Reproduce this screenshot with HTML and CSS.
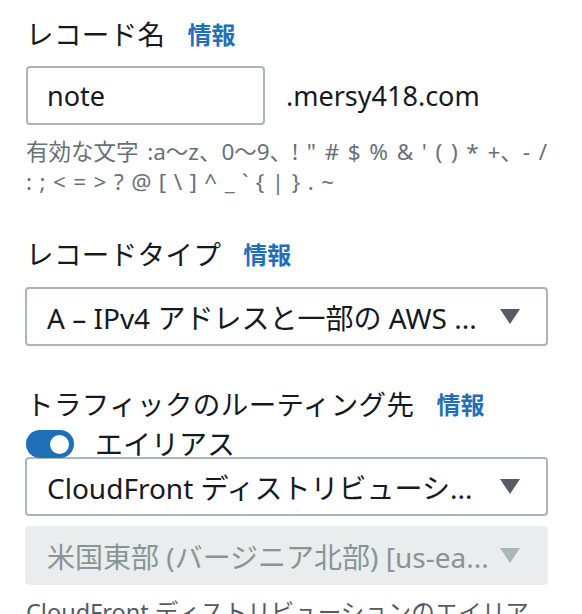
FILE: index.html
```html
<!DOCTYPE html>
<html lang="ja">
<head>
<meta charset="utf-8">
<link rel="stylesheet" href="styles.css">
</head>
<body>
<div class="form">
  <div class="label label-first"><span class="label-text">レコード名</span><a class="info">情報</a></div>
  <div class="name-row">
    <div class="input">note</div>
    <span class="domain">.mersy418.com</span>
  </div>
  <div class="help">
    <span class="help-line help-line1">有効な文字 :a〜z、0〜9、! " # $ % &amp; ' ( ) * +、- /</span>
    <span class="help-line help-line2">: ; &lt; = &gt; ? @ [ \ ] ^ _ ` { | } . ~</span>
  </div>

  <div class="label label-gap"><span class="label-text">レコードタイプ</span><a class="info">情報</a></div>
  <div class="select select-first">
    <span class="select-text">A – IPv4 アドレスと一部の AWS ...</span>
    <svg class="caret" width="20" height="15" viewBox="0 0 20 15"><polygon points="0,0 20,0 10,15" /></svg>
  </div>

  <div class="label label-gap2"><span class="label-text">トラフィックのルーティング先</span><a class="info">情報</a></div>
  <div class="toggle-row">
    <span class="toggle"><span class="knob"></span></span>
    <span class="toggle-label">エイリアス</span>
  </div>
  <div class="select">
    <span class="select-text">CloudFront ディストリビューシ...</span>
    <svg class="caret" width="20" height="15" viewBox="0 0 20 15"><polygon points="0,0 20,0 10,15" /></svg>
  </div>
  <div class="select disabled">
    <span class="select-text">米国東部 (バージニア北部) [us-ea...</span>
    <svg class="caret" width="20" height="15" viewBox="0 0 20 15"><polygon points="0,0 20,0 10,15" /></svg>
  </div>
  <p class="desc">CloudFront ディストリビューションのエイリア</p>
</div>
</body>
</html>
```
FILE: styles.css
```css
html, body {
  margin: 0;
  padding: 0;
  background: #ffffff;
}
body {
  font-family: "Noto Sans", "Noto Sans CJK JP", sans-serif;
  color: #16191f;
  overflow: hidden;
  height: 614px;
}
.form {
  padding: 17px 34px 0 25px;
}
.label {
  font-size: 27.5px;
  line-height: 36px;
  height: 36px;
  display: flex;
  align-items: center;
  padding-left: 1px;
}
.label-text {
  letter-spacing: 0.4px;
}
.info {
  color: #1f6fb9;
  font-weight: 700;
  font-size: 24px;
  margin-left: 22px;
}
.label-gap {
  margin-top: 40px;
}
.label-gap2 {
  margin-top: 41px;
}
.name-row {
  display: flex;
  align-items: center;
  margin-top: 13px;
  padding-left: 1px;
}
.input {
  box-sizing: border-box;
  width: 239px;
  height: 59px;
  border: 2px solid #aab7b8;
  border-radius: 4px;
  font-size: 27px;
  line-height: 55px;
  padding-left: 19px;
}
.domain {
  font-size: 27px;
  margin-left: 21px;
}
.help {
  margin: 12px 0 0 1px;
  font-size: 22.5px;
  line-height: 30px;
  color: #687078;
  white-space: nowrap;
  display: flex;
  flex-direction: column;
}
.help-line1 {
  word-spacing: 2.8px;
}
.help-line2 {
  word-spacing: 1.6px;
}
.select {
  box-sizing: border-box;
  width: 523px;
  height: 59px;
  border: 2px solid #aab7b8;
  border-radius: 4px;
  display: flex;
  align-items: center;
  padding: 0 26px 0 20px;
  font-size: 28px;
  background: #ffffff;
}
.select-first {
  margin-top: 14px;
}
.select-text {
  flex: 1;
  white-space: nowrap;
  overflow: hidden;
}
.caret polygon {
  fill: #545b64;
}
.disabled {
  margin-top: 10px;
  background: #eaeded;
  border-color: #eaeded;
  color: #879596;
}
.disabled .caret polygon {
  fill: #aab7b8;
}
.toggle-row {
  height: 34px;
  display: flex;
  align-items: flex-start;
  padding-left: 1px;
}
.toggle {
  margin-top: 7px;
  width: 48px;
  height: 28px;
  border-radius: 14px;
  background: #1f6fb9;
  display: flex;
  align-items: center;
  justify-content: flex-end;
  box-sizing: border-box;
  padding-right: 5px;
}
.knob {
  width: 19px;
  height: 19px;
  border-radius: 50%;
  background: #ffffff;
}
.toggle-label {
  font-size: 28px;
  line-height: 32px;
  margin-left: 21px;
  margin-top: 5px;
}
.desc {
  margin: 12px 0 0 1px;
  font-size: 23.5px;
  line-height: 30px;
  color: #545b64;
  white-space: nowrap;
}
```
